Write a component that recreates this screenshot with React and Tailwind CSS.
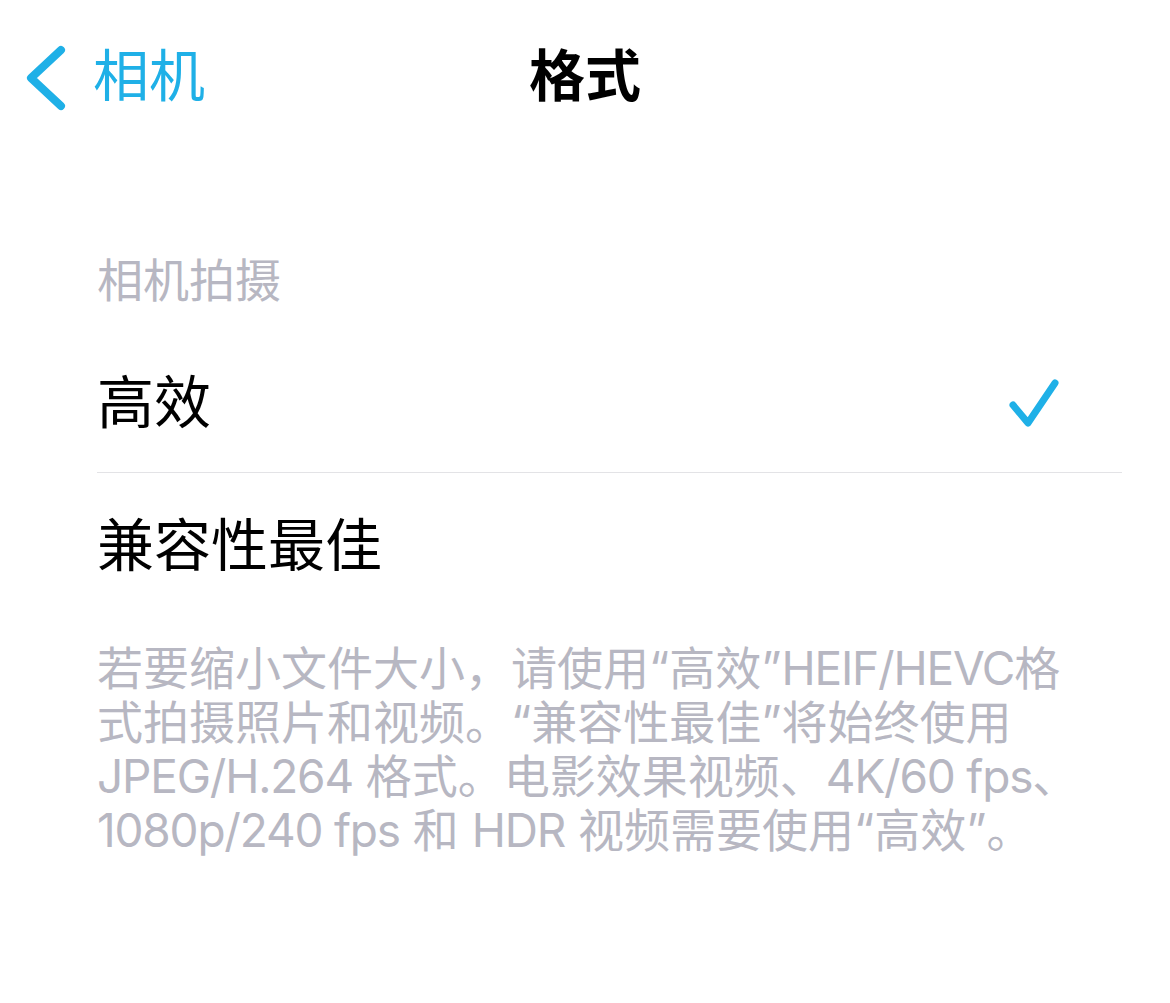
export default function App() {
  const cjk = { fontFamily: '"Inter", "Noto Sans CJK SC", "Noto Sans", sans-serif' };
  const L = ({ children }) => <span className="tracking-[-1.2px]">{children}</span>;
  return (
    <div className="w-[1170px] h-[1003px] bg-white overflow-hidden" style={cjk}>
      <div className="grid grid-cols-[1fr_auto_1fr] items-center h-[156px]">
        <div className="flex items-center pl-[24px] gap-[25px]">
          <svg width="44" height="68" viewBox="0 0 44 68" fill="none">
            <path d="M37 6 L7 34 L37 62" stroke="#1fb0e7" strokeWidth="8" strokeLinecap="round" strokeLinejoin="round" />
          </svg>
          <span className="text-[56px] leading-[68px] text-[#1fb0e7] pb-[4px]">相机</span>
        </div>
        <div className="text-[56px] leading-[68px] font-bold text-black pb-[4px]">格式</div>
        <div />
      </div>

      <div className="pt-[97px] pl-[97px] pr-[48px]">
        <div className="text-[46px] leading-[54px] text-[#b7b7c2] pb-[28px]">相机拍摄</div>
        <div className="flex items-center justify-between h-[138px] border-b border-[#e3e3e6] pr-[60px]">
          <span className="text-[57px] leading-[68px] text-black pb-[2px]">高效</span>
          <svg width="56" height="56" viewBox="0 0 56 56" fill="none">
            <path d="M7 29 L22 47 L49 7" stroke="#1fb0e7" strokeWidth="7" strokeLinecap="round" strokeLinejoin="round" />
          </svg>
        </div>
        <div className="flex items-center h-[146px]">
          <span className="text-[57px] leading-[68px] text-black">兼容性最佳</span>
        </div>
        <p className="pt-[22px] text-[46px] leading-[54px] text-[#b7b7c2] whitespace-nowrap">
          若要缩小文件大小，请使用“高效”<L>HEIF/HEVC</L>格
          <br />
          式拍摄照片和视频。“兼容性最佳”将始终使用
          <br />
          <L>JPEG/H.264</L> 格式。电影效果视频、<L>4K/60 fps</L>、
          <br />
          <L>1080p/240 fps</L> 和 <L>HDR</L> 视频需要使用“高效”。
        </p>
      </div>
    </div>
  );
}
